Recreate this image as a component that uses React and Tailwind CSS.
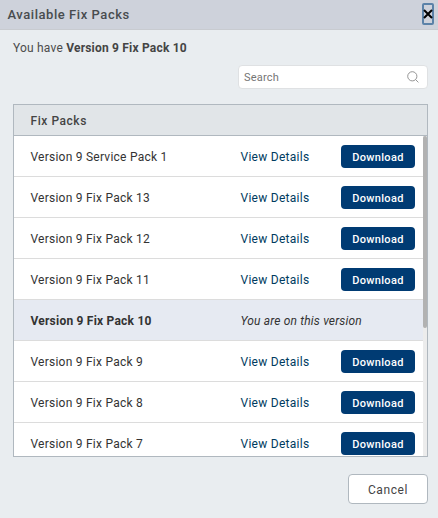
import React from "react";

const packs = [
  { name: "Version 9 Service Pack 1" },
  { name: "Version 9 Fix Pack 13" },
  { name: "Version 9 Fix Pack 12" },
  { name: "Version 9 Fix Pack 11" },
  { name: "Version 9 Fix Pack 10", current: true },
  { name: "Version 9 Fix Pack 9" },
  { name: "Version 9 Fix Pack 8" },
  { name: "Version 9 Fix Pack 7" },
];

function PackRow({ name, current }) {
  if (current) {
    return (
      <li className="flex h-[41px] shrink-0 items-center border-b border-[#dcdcdc] bg-[#e6eaf2] pl-[16.5px] pt-px">
        <span className="w-[210px] font-bold tracking-[0.22px]">{name}</span>
        <span className="italic tracking-[0.17px]">You are on this version</span>
      </li>
    );
  }
  return (
    <li className="flex h-[41px] shrink-0 items-center border-b border-[#dcdcdc] bg-white pl-[16.5px] pr-2">
      <span className="w-[210px] pt-px tracking-[0.24px]">{name}</span>
      <a className="pt-px tracking-[0.27px] text-[#003b60]">View Details</a>
      <button className="ml-auto mt-px h-[23px] w-[74px] rounded-[4px] bg-[#003b73] pt-[2px] text-[11px] font-medium tracking-[0.3px] text-white">
        Download
      </button>
    </li>
  );
}

export default function App() {
  return (
    <div className="flex h-[518px] w-[438px] flex-col overflow-hidden bg-[#e9edf0] font-['Roboto',sans-serif] text-[12px] leading-[16px] text-[#333]">
      <header className="flex h-[30px] shrink-0 items-start justify-between border-b border-[#c8cbd0] bg-[#ced2db] pl-[7.5px] pr-[4px]">
        <h1 className="mt-[7px] text-[13px] font-medium tracking-[0.55px] text-[#484c4f]">Available Fix Packs</h1>
        <button className="mt-[3px] flex h-[22px] w-[12px] items-center justify-center rounded-[2px] border-2 border-[#5b82a8]">
          <svg viewBox="0 0 10 10" className="h-[10px] w-[10px] shrink-0" fill="none" stroke="#000" strokeWidth="2">
            <path d="M1 1L9 9M9 1L1 9" />
          </svg>
        </button>
      </header>

      <main className="flex flex-col pl-[13px] pr-[10px]">
        <p className="mt-[10px] tracking-[0.2px] text-[#4c4c4c]">
          You have <b className="font-bold text-[#444]">Version 9 Fix Pack 10</b>
        </p>

        <div className="mt-[9px] flex h-6 w-[190px] items-center justify-between self-end rounded-[4px] border border-[#dfe1e3] bg-white pl-[5px] pr-[8px]">
          <span className="pt-[2px] text-[11px] tracking-[0.2px] text-[#757575]">Search</span>
          <svg viewBox="0 0 12 12" className="h-3 w-3" fill="none" stroke="#8a8a8a" strokeWidth="0.9">
            <circle cx="5.3" cy="5.3" r="4.6" />
            <path d="M8.6 8.6L11.4 11.4" />
          </svg>
        </div>

        <section className="mt-[15px] flex h-[353px] flex-col border border-[#b0b8bf] bg-white">
          <h2 className="flex h-[31px] shrink-0 items-center border-b border-[#b0b8bf] bg-[#e1e5e8] pl-[16.5px] pt-px font-medium tracking-[0.55px] text-[#444]">
            Fix Packs
          </h2>
          <div className="flex min-h-0 flex-1">
            <ul className="flex flex-1 flex-col overflow-hidden">
              {packs.map((pack) => (
                <PackRow key={pack.name} {...pack} />
              ))}
            </ul>
            <div className="w-1 bg-[#ececec]">
              <div className="h-[192px] rounded-[2px] bg-[#b2b2b2]" />
            </div>
          </div>
        </section>

        <button className="mt-[17px] h-[30px] w-20 self-end rounded-[4px] border border-[#b0b8bf] bg-white pt-px tracking-[0.6px] text-[#444]">
          Cancel
        </button>
      </main>
    </div>
  );
}
